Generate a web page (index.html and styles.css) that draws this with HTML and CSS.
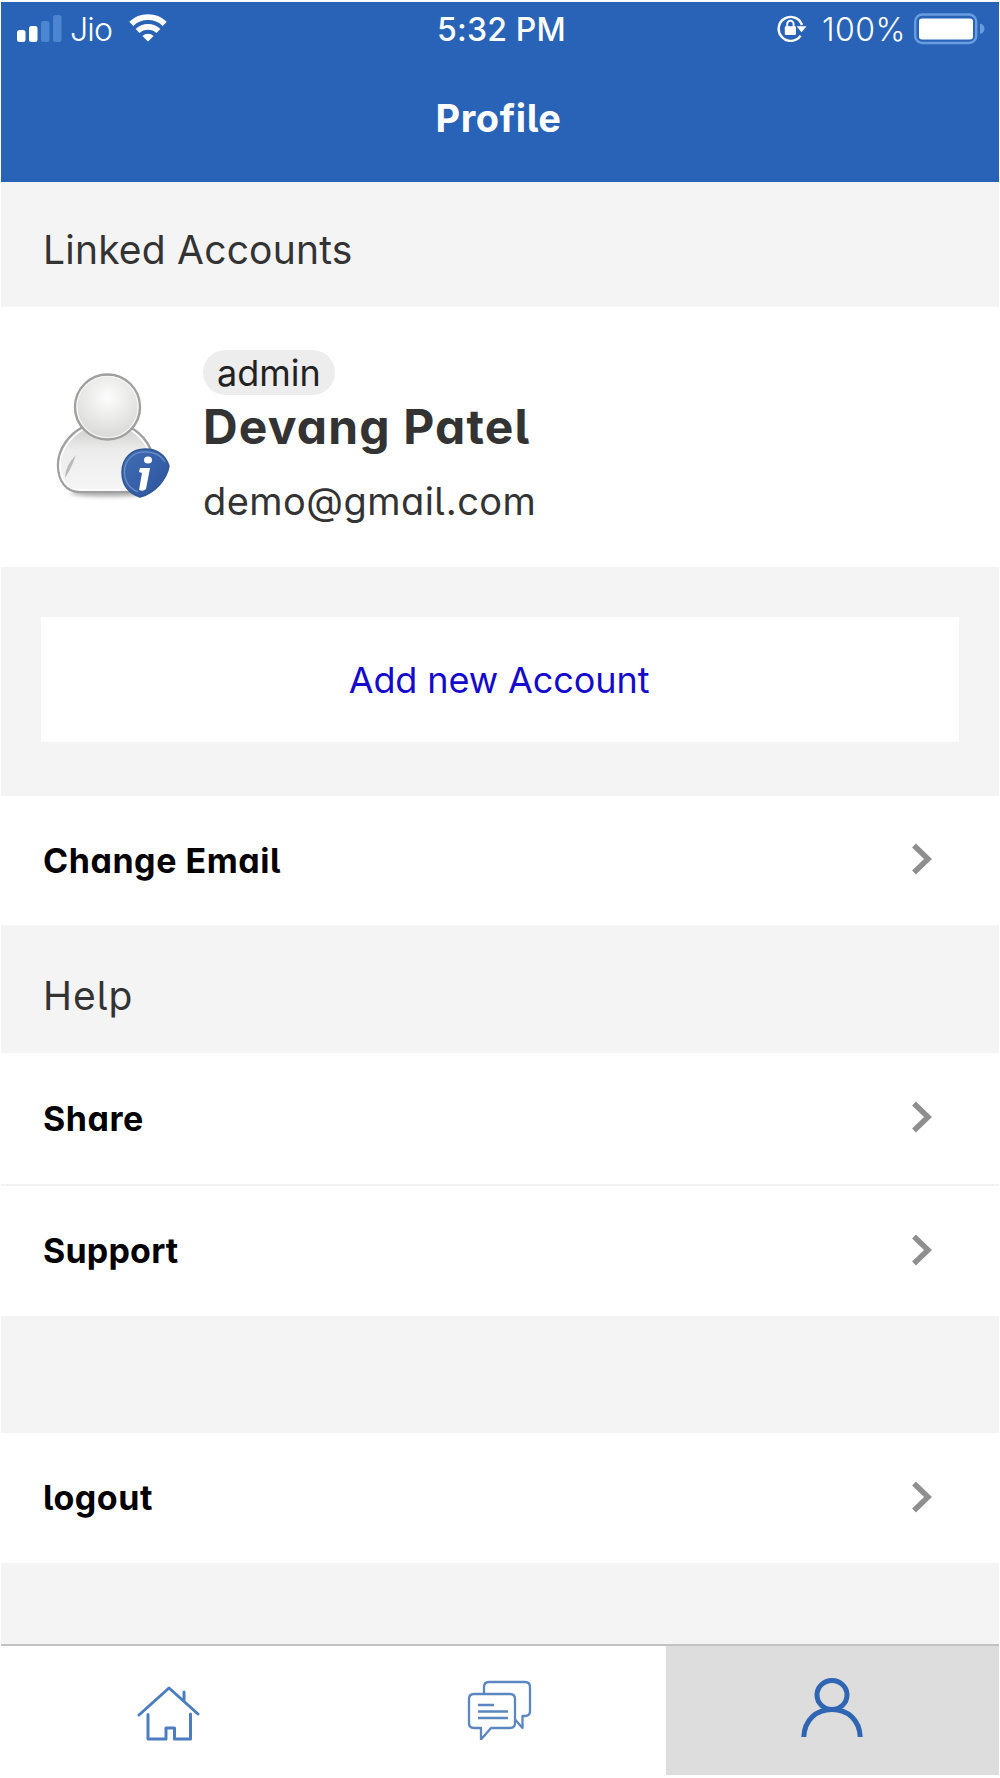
FILE: index.html
```html
<!DOCTYPE html>
<html lang="en">
<head>
<meta charset="utf-8">
<title>Profile</title>
<link rel="stylesheet" href="styles.css">
</head>
<body>
<div class="screen">
  <header class="header">
    <div class="status">
      <div class="status-side">
        <svg class="signal" width="46" height="28" viewBox="0 0 46 28">
          <g fill="#fff"><rect x="0" y="15" width="8.500" height="12" rx="2.5"/><rect x="12" y="11" width="8.500" height="16" rx="2.5"/></g>
          <g fill="#4d86d0"><rect x="24" y="6" width="8.500" height="21" rx="2.5"/><rect x="36" y="0" width="8.500" height="27" rx="2.5"/></g>
        </svg>
        <span class="status-text carrier">Jio</span>
        <svg class="wifi" width="38" height="28" viewBox="0 0 38 28" fill="none" stroke="#fff" stroke-width="5.8">
          <path d="M2.2 9.8a24.5 24.5 0 0 1 33.6 0"/>
          <path d="M8.6 17a15.2 15.2 0 0 1 20.8 0"/>
          <path d="M19 27.400l-5.600-5.400a8.200 8.200 0 0 1 11.200 0z" fill="#fff" stroke="none"/>
        </svg>
      </div>
      <span class="status-text clock">5:32 PM</span>
      <div class="status-side status-right">
        <svg class="lock" width="32" height="28" viewBox="0 0 32 28">
          <path d="M25 11A12 12 0 1 0 23.600 21.600" fill="none" stroke="#fff" stroke-width="2.4"/>
          <path d="M19.500 12.300h10l-5 6z" fill="#fff"/>
          <rect x="7.800" y="12.300" width="11.200" height="8.600" rx="1.200" fill="#fff"/>
          <path d="M10.200 13V10a3.200 3.200 0 0 1 6.400 0V13" fill="none" stroke="#fff" stroke-width="1.900"/>
        </svg>
        <span class="status-text percent">100%</span>
        <svg class="battery" width="72" height="32" viewBox="0 0 72 32">
          <rect x="1.2" y="1.5" width="61" height="28.5" rx="7" fill="none" stroke="#6a9ce0" stroke-width="2.4"/>
          <rect x="5" y="5.500" width="54" height="21" rx="3" fill="#fff"/>
          <path d="M66 10.5q4.500 1.200 4.500 5.200t-4.500 5.200z" fill="#6a9ce0"/>
        </svg>
      </div>
    </div>
    <h1 class="title">Profile</h1>
  </header>

  <main class="content">
    <h2 class="section-title linked">Linked Accounts</h2>

    <section class="account">
      <svg class="avatar" width="118" height="136" viewBox="0 0 118 136">
        <defs>
          <radialGradient id="head" cx=".5" cy=".35" r=".65"><stop offset="0" stop-color="#fdfdfd"/><stop offset=".55" stop-color="#e9e9e8"/><stop offset="1" stop-color="#d7d7d4"/></radialGradient>
          <linearGradient id="body" x1="0" y1="0" x2="0" y2="1"><stop offset="0" stop-color="#cfcfcd"/><stop offset=".35" stop-color="#ececec"/><stop offset="1" stop-color="#f6f6f6"/></linearGradient>
          <linearGradient id="badge" x1="0" y1="0" x2="1" y2="1"><stop offset="0" stop-color="#416db4"/><stop offset="1" stop-color="#2c549e"/></linearGradient>
          <filter id="soft" x="-20%" y="-100%" width="140%" height="300%"><feGaussianBlur stdDeviation="2"/></filter>
        </defs>
        <ellipse cx="54" cy="122" rx="38" ry="3.500" fill="#aaa" filter="url(#soft)"/>
        <path d="M29 56C15 63 4 78 4 94c0 16 8 27 22 27h53c13 0 21-11 21-27 0-16-11-32-25-38z" fill="url(#body)" stroke="#a0a0a0" stroke-width="2.400"/>
        <path d="M29 58.500C17 65 6 80 6 94c0 15 7 25 20 25h53c12 0 19-10 19-25 0-14-10-29-23-36" fill="none" stroke="#fff" stroke-width="1.500"/>
        <path d="M22 84q-11 11-11 23 6-9 11-23z" fill="#b9b9b7"/>
        <circle cx="53.500" cy="36" r="32.500" fill="url(#head)" stroke="#a0a09e" stroke-width="2.400"/>
        <circle cx="53.500" cy="36" r="30.500" fill="none" stroke="#f6f6f5" stroke-width="1.200"/>
        <path d="M91 78c11 0 20 5 24 17-2 13-14 27-29 31-12-4-18-13-18-25 0-14 10-23 23-23z" fill="url(#badge)" stroke="#315895" stroke-width="1.500"/>
        <path d="M91 80.800c9 0 16 3 20 10M84 121c-9-4-13.500-11-13.500-20 0-12 9-20.200 20.500-20.200" fill="none" stroke="#6f91c8" stroke-width="1.200"/>
        <ellipse cx="94" cy="89" rx="4" ry="3.500" fill="#fff"/>
        <path d="M86 97h10l-4 21q-3 3-7 1l3-17-3-1z" fill="#fff"/>
      </svg>
      <div class="account-info">
        <span class="role">admin</span>
        <strong class="name">Devang Patel</strong>
        <span class="email">demo@gmail.com</span>
      </div>
    </section>

    <div class="add-area"><a class="add-button">Add new Account</a></div>

    <div class="row change-row">
      <span class="row-label">Change Email</span>
      <svg class="chevron" width="22" height="34" viewBox="0 0 22 34"><path d="M3 3.500L17 17 3 30.500"/></svg>
    </div>

    <h2 class="section-title help">Help</h2>

    <div class="row divided">
      <span class="row-label">Share</span>
      <svg class="chevron" width="22" height="34" viewBox="0 0 22 34"><path d="M3 3.500L17 17 3 30.500"/></svg>
    </div>
    <div class="row">
      <span class="row-label support">Support</span>
      <svg class="chevron" width="22" height="34" viewBox="0 0 22 34"><path d="M3 3.500L17 17 3 30.500"/></svg>
    </div>

    <div class="row logout-row">
      <span class="row-label">logout</span>
      <svg class="chevron" width="22" height="34" viewBox="0 0 22 34"><path d="M3 3.500L17 17 3 30.500"/></svg>
    </div>
  </main>

  <nav class="tabs">
    <a class="tab">
      <svg class="home-icon" width="64" height="56" viewBox="0 0 64 56" fill="none" stroke="#4c7dc0" stroke-width="3" stroke-linecap="round" stroke-linejoin="round">
        <path d="M2 29L32 2l29 26M47 6v9M11 28.500V53h18V42h8.500v11H53.500V28"/>
      </svg>
    </a>
    <a class="tab">
      <svg class="chat-icon" width="66" height="60" viewBox="0 0 66 60" fill="none" stroke="#5b86c0" stroke-width="2.300" stroke-linejoin="round">
        <path d="M17 13V7q0-5 5-5h36q5 0 5 5v24q0 5-5 5h-2.500v12l-7-8"/>
        <path d="M7 14h36q5 0 5 5v24q0 5-5 5H24L14 59.500V48H7q-5 0-5-5V19q0-5 5-5z"/>
        <path d="M11 25h16M11 31.500h30M11 38h30"/>
      </svg>
    </a>
    <a class="tab active">
      <svg class="user-icon" width="64" height="60" viewBox="0 0 64 60" fill="none" stroke="#2f66b4" stroke-width="5">
        <ellipse cx="32" cy="17" rx="15" ry="14.500"/>
        <path d="M3.800 59C4.500 42 16 31.500 32 31.500S59.500 42 60.200 59"/>
      </svg>
    </a>
  </nav>
</div>
</body>
</html>
```

FILE: styles.css
```css
* { box-sizing: border-box; }

body {
  margin: 0;
  background: #fff;
  font-family: Inter, "Liberation Sans", sans-serif;
  color: #333;
}

svg { display: block; flex: none; }

.screen {
  display: flex;
  flex-direction: column;
  width: 998px;
  height: 1773px;
  margin: 2px 1px 0;
  background: #f4f4f4;
}

.header {
  height: 180px;
  background: #2963b7;
  color: #fff;
}

.status {
  display: grid;
  grid-template-columns: 1fr auto 1fr;
  height: 56px;
  padding: 0 13px 0 16px;
}

.status-side { display: flex; align-items: flex-start; }
.status-right { justify-content: flex-end; }

.status-text {
  font-size: 32px;
  line-height: 56px;
  white-space: nowrap;
}

.signal { margin-top: 13px; }
.carrier { margin-left: 7px; letter-spacing: -0.8px; font-weight: 300; }
.wifi { margin: 12px 0 0 17px; }
.clock { font-weight: 500; letter-spacing: 0.2px; }
.lock { margin: 12px 13px 0 0; }
.percent { font-weight: 300; letter-spacing: 0.5px; }
.battery { margin: 11px 0 0 8px; }

/* Single-storey "a" and tailed "l" */
.title, .section-title, .name, .email, .row-label {
  font-feature-settings: "cv11", "cv05";
}

.title {
  margin: 0;
  padding: 28px 3px 0 0;
  font-size: 38px;
  line-height: 64px;
  font-weight: 700;
  letter-spacing: 0.6px;
  text-align: center;
}

.section-title {
  display: flex;
  align-items: center;
  margin: 0;
  padding-left: 42px;
  font-size: 39px;
  font-weight: 400;
}

.linked { height: 125px; padding-top: 9px; letter-spacing: 0.2px; }
.help { height: 128px; padding-top: 12px; letter-spacing: 1px; }

.account {
  display: flex;
  height: 260px;
  padding: 43px 53px 0;
  background: #fff;
}

.avatar { margin-top: 21px; }

.account-info {
  display: flex;
  flex-direction: column;
  align-items: flex-start;
  margin-left: 31px;
}

.role {
  height: 45px;
  padding: 0 14px;
  border-radius: 23px;
  background: #ededed;
  color: #222;
  font-size: 36px;
  line-height: 46px;
}

.name { font-size: 48px; line-height: 64px; font-weight: 700; letter-spacing: 1.15px; }
.email { margin-top: 12px; font-size: 38px; line-height: 60px; letter-spacing: 0.45px; }

.add-area { height: 229px; padding: 50px 40px 54px; }

.add-button {
  display: flex;
  align-items: center;
  justify-content: center;
  height: 125px;
  padding-right: 2px;
  background: #fff;
  color: #1409cd;
  font-size: 36px;
  line-height: 40px;
  letter-spacing: -0.1px;
}

.row {
  display: flex;
  align-items: center;
  justify-content: space-between;
  height: 130px;
  padding: 0 66px 3px 42px;
  background: #fff;
}

.change-row { height: 129px; }
.divided { height: 133px; border-bottom: 2px solid #f2f2f2; }
.logout-row { margin-top: 117px; }
.row-label { padding-top: 2px; color: #000; font-size: 34px; font-weight: 700; letter-spacing: 0.55px; }
.support { letter-spacing: 0.2px; }
.chevron { fill: none; stroke: #8f8f8f; stroke-width: 5.5; }

.tabs {
  display: grid;
  grid-template-columns: repeat(3, 1fr);
  height: 131px;
  margin-top: auto;
  border-top: 2px solid #c2c2c2;
  background: #fff;
}

.tab { display: flex; justify-content: center; }
.active { background: #ddd; }
.home-icon { margin: 40px 0 0 3px; }
.chat-icon { margin-top: 34px; }
.user-icon { margin: 32px 2px 0 0; }
```
